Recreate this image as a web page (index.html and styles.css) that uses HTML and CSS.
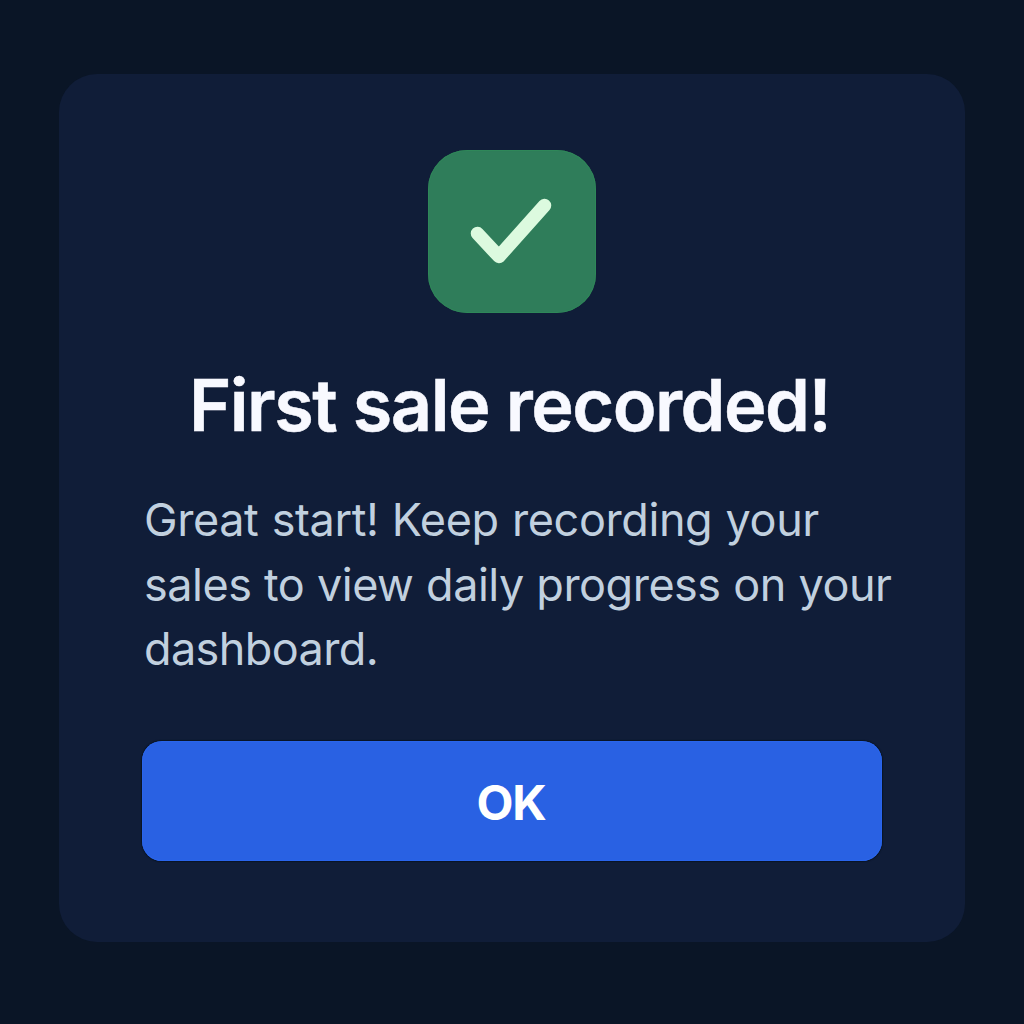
FILE: index.html
```html
<!DOCTYPE html>
<html lang="en">
<head>
<meta charset="utf-8">
<title>First sale recorded</title>
<link rel="stylesheet" href="styles.css">
</head>
<body>
<main class="dialog">
  <div class="badge">
    <svg class="check" viewBox="0 0 168 163" fill="none" aria-hidden="true"><path d="M49.500 83.500 71 106.500 116.500 55.500"/></svg>
  </div>
  <h1 class="title">First sale recorded!</h1>
  <p class="message"><span class="line line-one">Great start! Keep recording your</span> <span class="line line-two">sales to view daily progress on your</span> <span class="line line-three">dashboard.</span></p>
  <button class="confirm" type="button">OK</button>
</main>
</body>
</html>
```

FILE: styles.css
```css
* { box-sizing: border-box; }
body {
  margin: 0;
  height: 1024px;
  padding: 74px 59px 82px;
  background: #0a1526;
  font-family: Inter, "Liberation Sans", sans-serif;
  overflow: hidden;
}
.dialog {
  display: flex;
  flex-direction: column;
  align-items: center;
  width: 906px;
  height: 868px;
  padding-top: 76px;
  border-radius: 38px;
  background: #101d38;
}
.badge {
  width: 168px;
  height: 163px;
  border-radius: 39px;
  background: #2f7d5a;
  box-shadow: inset 0 0 1px 0.5px #319259;
}
.check {
  display: block;
  width: 168px;
  height: 163px;
  stroke: #dcfadf;
  stroke-width: 13.5;
  stroke-linecap: round;
  stroke-linejoin: round;
}
.title {
  margin: 48px 0 0;
  padding-right: 5px;
  line-height: 88px;
  font-size: 72px;
  font-weight: 600;
  letter-spacing: -1.5px;
  white-space: nowrap;
  color: #f8f9ff;
  -webkit-text-stroke: 0.5px #f8f9ff;
}
.message {
  width: 740px;
  margin: 39px 0 0;
  padding-left: 2px;
  font-size: 45px;
  line-height: 64.5px;
  color: #c1d0df;
}
.line { display: block; width: max-content; white-space: nowrap; }
.line-one { letter-spacing: -0.4px; word-spacing: 1px; }
.line-two { letter-spacing: -0.5px; word-spacing: 0.5px; }
.line-three { letter-spacing: -0.6px; }
.confirm {
  width: 740px;
  height: 120.500px;
  margin: 59px 0 0;
  padding: 3px 2px 0 0;
  border: 0;
  border-radius: 20px;
  background: #2961e3;
  box-shadow: 0 0 1px 0.5px #091426, inset 0 0 1px 0.5px #2d6bf4;
  color: #fff;
  font: 700 48px Inter, "Liberation Sans", sans-serif;
  letter-spacing: -1.2px;
}
```
